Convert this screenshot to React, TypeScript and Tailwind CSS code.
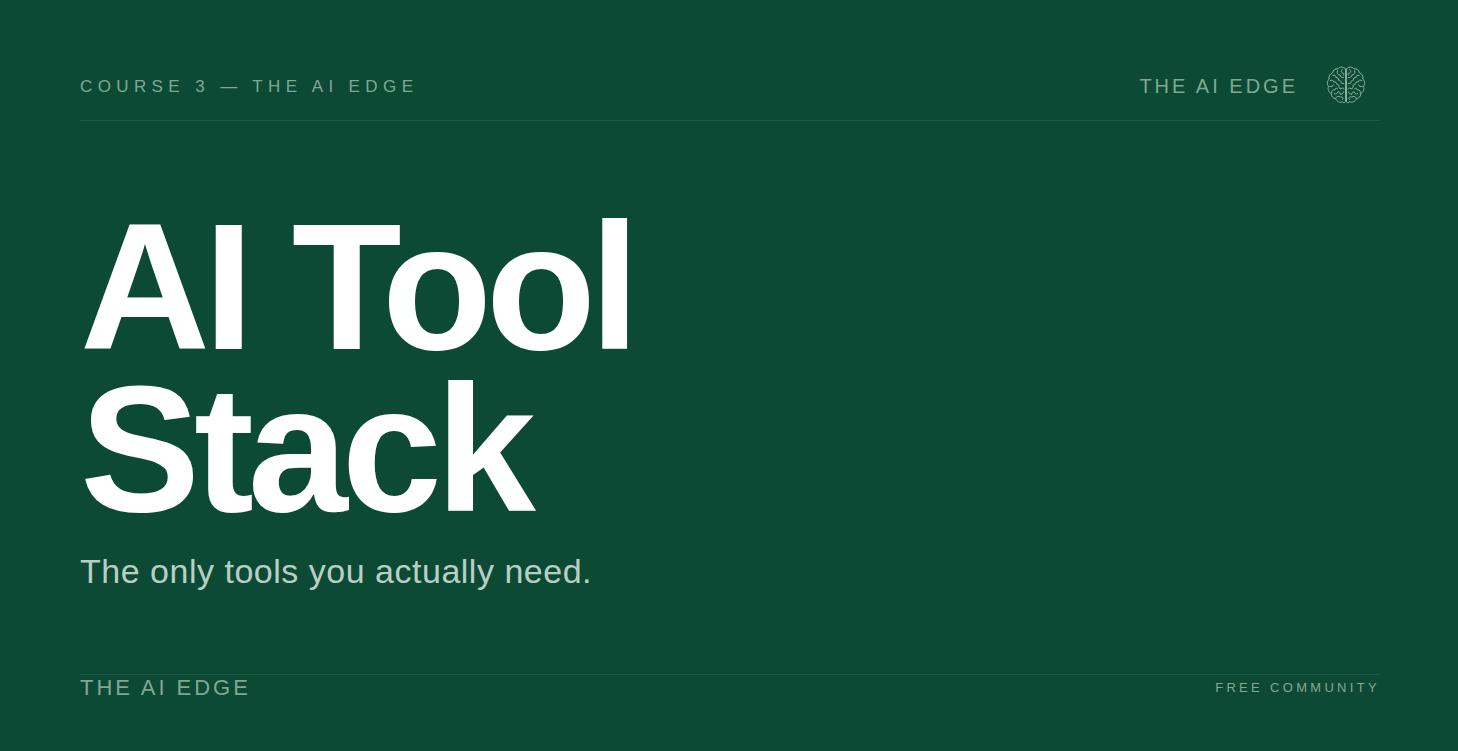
const Brain = () => (
  <svg width="40" height="40" viewBox="0 0 40 40" fill="none" stroke="#8fb5a3" strokeWidth="1" strokeLinecap="round" strokeLinejoin="round">
    {/* outline */}
    <path d="M19.3 3.6C17 1.4 13.4 1.6 12 3.8C9.2 3.4 6.8 5.2 6.6 7.8C3.8 8.8 2.4 11.4 3.2 14C1 16 .8 19.4 2.6 21.6C1.4 24.2 2.6 27.2 5.2 28.2C5 31 7 33.4 9.6 33.6C10.8 36.6 13.8 38 16.4 36.8C17.4 38 18.6 38 19.3 37Z" />
    <path d="M20.7 3.6C23 1.4 26.6 1.6 28 3.8C30.8 3.4 33.2 5.2 33.4 7.8C36.2 8.8 37.6 11.4 36.8 14C39 16 39.2 19.4 37.4 21.6C38.6 24.2 37.4 27.2 34.8 28.2C35 31 33 33.4 30.4 33.6C29.2 36.6 26.2 38 23.6 36.8C22.6 38 21.4 38 20.7 37Z" />
    {/* left folds */}
    <path d="M16.4 4.4C14.6 5.8 15 8 17.2 8.2C18.2 8.4 18.4 9.6 17.4 10.2M11.4 5.8C10.4 8 11.8 10.2 14 9.8C14.2 11.8 15.8 13 17.6 12.6M6.8 10.4C8.8 9.6 10.2 10.6 9.8 12.6C11.8 12.2 13 13.4 12.4 15.2C13.8 15 15 15.8 15 17.2C15 18.6 16.4 19.2 17.8 18.4M4.2 15.6C6 14.6 7.6 15.2 7.8 17C9.6 16.6 11 17.6 10.8 19.4C12.4 19.2 13.4 20.4 13 21.8C12.6 23.4 14.6 24.4 16 23.2C16.8 22.6 17.8 23 18 24M3.6 21.4C5.4 22 7 21.4 7.4 20M5.6 27.8C5.4 25.8 7 24.4 8.8 25C9 23.4 10.4 22.6 11.4 23.6M8.4 28.8C10.2 29.4 11.6 28.4 11.8 26.8C13.4 26.8 14.6 27.8 14.2 29.4C15.8 29.2 17.4 28.6 17.6 27M9.8 33.4C10.2 31.6 11.8 30.8 13.2 31.6C14.6 32.4 15.4 31.6 16.4 32.2C17.4 32.8 17.2 34 16.4 34.6" />
    {/* right folds */}
    <path d="M23.6 4.4C25.4 5.8 25 8 22.8 8.2C21.8 8.4 21.6 9.6 22.6 10.2M28.6 5.8C29.6 8 28.2 10.2 26 9.8C25.8 11.8 24.2 13 22.4 12.6M33.2 10.4C31.2 9.6 29.8 10.6 30.2 12.6C28.2 12.2 27 13.4 27.6 15.2C26.2 15 25 15.8 25 17.2C25 18.6 23.6 19.2 22.2 18.4M35.8 15.6C34 14.6 32.4 15.2 32.2 17C30.4 16.6 29 17.6 29.2 19.4C27.6 19.2 26.6 20.4 27 21.8C27.4 23.4 25.4 24.4 24 23.2C23.2 22.6 22.2 23 22 24M36.4 21.4C34.6 22 33 21.4 32.6 20M34.4 27.8C34.6 25.8 33 24.4 31.2 25C31 23.4 29.6 22.6 28.6 23.6M31.6 28.8C29.8 29.4 28.4 28.4 28.2 26.8C26.6 26.8 25.4 27.8 25.8 29.4C24.2 29.2 22.6 28.6 22.4 27M30.2 33.4C29.8 31.6 28.2 30.8 26.8 31.6C25.4 32.4 24.6 31.6 23.6 32.2C22.6 32.8 22.8 34 23.6 34.6" />
  </svg>
);

export default function App() {
  return (
    <div className="h-[751px] bg-[#0d4a36] overflow-hidden">
      <div className="h-full pl-20 pr-[78px] flex flex-col font-['Liberation_Sans',Arial,sans-serif]">
        {/* Header */}
        <header className="h-[121px] pt-[65px] border-b border-white/[0.08] flex justify-between items-start">
          <span className="mt-[13px] text-[17px] leading-[18px] tracking-[0.317em] text-[#7fa893]">COURSE 3 — THE AI EDGE</span>
          <div className="flex items-start gap-[28px] pr-[14px]">
            <span className="mt-[10px] text-xl leading-[23px] tracking-[0.15em] text-[#7fa893]">THE AI EDGE</span>
            <Brain />
          </div>
        </header>

        {/* Title */}
        <main className="flex-1 pt-[85px]">
          <h1 className="text-[180px] leading-[162px] font-bold tracking-[-0.034em] text-white">
            AI Tool<br />Stack
          </h1>
          <p className="mt-[22px] text-[34px] leading-[39px] tracking-[0.015em] text-[#b8d0c4]">The only tools you actually need.</p>
        </main>

        {/* Footer */}
        <footer className="h-[77px] border-t border-white/[0.08] flex justify-between items-start">
          <span className="text-[22px] leading-[25px] tracking-[0.135em] text-[#7fa893]">THE AI EDGE</span>
          <span className="mt-[6px] text-[13px] leading-[14px] tracking-[0.255em] text-[#7fa893]">FREE COMMUNITY</span>
        </footer>
      </div>
    </div>
  );
}
